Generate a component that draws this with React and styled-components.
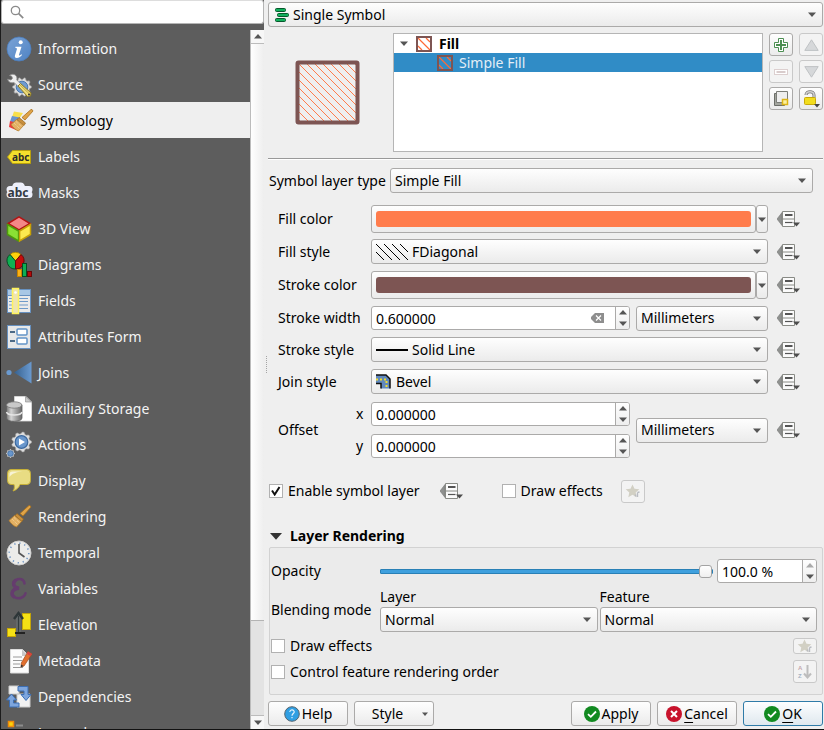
import React, { useState } from "react";
import styled, { createGlobalStyle, css } from "styled-components";

const GlobalStyle = createGlobalStyle`
  * { box-sizing: border-box; }
  html, body { margin: 0; height: 100%; }
  #root { height: 100%; }
  body, button, input, select {
    font-family: "Noto Sans", "Open Sans", sans-serif;
    font-size: 14px;
    line-height: 20px;
    color: #000;
  }
  body { background: #efefef; overflow: hidden; }
  svg { display: block; }
`;

const raised = css`
  background: linear-gradient(#fefefe, #ebebeb);
  border: 1px solid #abaaa9;
  border-radius: 3px;
`;

/* ---------- window ---------- */

const Dialog = styled.div`
  display: flex;
  height: 100vh;
  border-left: 1px solid #1c1c1c;
  border-bottom: 1px solid #111;
  background: #efefef;
`;

const Sidebar = styled.aside`
  flex: 0 0 263px;
  display: flex;
  flex-direction: column;
  background: #5d5d5d;
  min-height: 0;
`;

const SearchBox = styled.label`
  flex: none;
  display: flex;
  align-items: center;
  gap: 6px;
  height: 24px;
  padding: 0 8px;
  background: #fff;
  border: 1px solid #b4b4b4;
  border-top-color: #ddd;
  border-radius: 3px;
`;

const SearchInput = styled.input`
  flex: 1;
  min-width: 0;
  border: 0;
  padding: 0;
  outline: 0;
  background: transparent;
`;

const SidebarBody = styled.div`
  flex: 1;
  display: flex;
  min-height: 0;
  padding-top: 6px;
`;

const NavList = styled.nav`
  flex: 1;
  min-width: 0;
  overflow: hidden;
`;

const NavItem = styled.button`
  display: flex;
  align-items: center;
  gap: 6px;
  width: 100%;
  height: 36px;
  border: 0;
  padding: 1px 0 0 ${(p) => (p.$active ? 7 : 5)}px;
  text-align: left;
  color: ${(p) => (p.$active ? "#000" : "#f4f4f4")};
  background: ${(p) => (p.$active ? "#efefef" : "transparent")};
`;

const Scrollbar = styled.div`
  flex: 0 0 14px;
  display: flex;
  flex-direction: column;
  background: #e3e3e3;
  border-left: 1px solid #bcbcbc;
`;

const ScrollButton = styled.button`
  flex: 0 0 14px;
  display: grid;
  place-items: center;
  padding: 0;
  border: 0;
  background: #f7f7f7;
  border-top: ${(p) => (p.$down ? "1px solid #bcbcbc" : "0")};
  border-bottom: ${(p) => (p.$down ? "0" : "1px solid #bcbcbc")};
`;

const ScrollTrack = styled.div`
  flex: 1;
  display: flex;
`;

const ScrollThumb = styled.div`
  flex: 1;
  height: 86%;
  background: linear-gradient(to right, #fff, #eeeeee);
  border-bottom: 1px solid #b4b4b4;
`;

const Splitter = styled.div`
  flex: 0 0 4px;
  display: grid;
  place-items: center;
`;

const SplitterGrip = styled.span`
  height: 17px;
  border-left: 1px dotted #a5a5a5;
`;

const Main = styled.main`
  flex: 1;
  min-width: 0;
  display: flex;
  flex-direction: column;
  padding: 2px 1px 3px 0;
`;

/* ---------- controls ---------- */

const Stack = styled.div`
  display: grid;
  align-items: center;
  flex: ${(p) => p.$flex || "1"};
  min-width: 0;
  height: 25px;
  > * { grid-area: 1 / 1; }
`;

const Select = styled.select`
  appearance: none;
  width: 100%;
  height: 25px;
  padding: 0 24px 0 ${(p) => p.$indent || 4}px;
  outline: 0;
  ${raised}
`;

const Overlay = styled.span`
  pointer-events: none;
  justify-self: ${(p) => (p.$end ? "end" : "start")};
  margin: ${(p) => (p.$end ? "0 7px 0 0" : `0 0 0 ${p.$inset || 5}px`)};
`;

const SpinBox = styled.div`
  flex: ${(p) => p.$flex || "1"};
  min-width: 0;
  display: flex;
  align-items: center;
  height: 24px;
  background: #fff;
  border: 1px solid #abaaa9;
  border-radius: 3px;
  overflow: hidden;
`;

const SpinInput = styled.input`
  flex: 1;
  min-width: 0;
  height: 22px;
  padding: 0 4px;
  border: 0;
  outline: 0;
  background: transparent;
`;

const ClearButton = styled.button`
  border: 0;
  padding: 0;
  margin-right: 11px;
  background: transparent;
`;

const SpinButtons = styled.div`
  flex: 0 0 14px;
  align-self: stretch;
  display: grid;
  grid-template-rows: 1fr 1fr;
  border-left: 1px solid #abaaa9;
  background: linear-gradient(#fefefe, #eeeeee);
`;

const SpinStep = styled.button`
  display: grid;
  place-items: center;
  border: 0;
  padding: 0;
  background: transparent;
`;

const ToolButton = styled.button`
  display: grid;
  place-items: center;
  width: 24px;
  height: ${(p) => (p.$short ? 16 : 23)}px;
  padding: 0;
  ${raised}
  ${(p) => p.disabled && css`border-color: #c9c9c9; background: #f3f3f3;`}
`;

const OverrideButton = styled.button`
  flex: none;
  width: 24px;
  padding: 0;
  border: 0;
  background: transparent;
`;

const CheckLabel = styled.label`
  display: flex;
  align-items: center;
  gap: 5px;
`;

const CheckBox = styled.span`
  display: grid;
  place-items: center;
  > * { grid-area: 1 / 1; pointer-events: none; }
  > input { pointer-events: auto; }
`;

const CheckInput = styled.input`
  appearance: none;
  width: 14px;
  height: 14px;
  margin: 0;
  background: #fff;
  border: 1px solid #b1b1b1;
`;

/* ---------- symbol area ---------- */

const SymbolArea = styled.section`
  display: flex;
  margin-top: 6px;
  gap: 6px;
  height: 119px;
`;

const Preview = styled.div`
  flex: 0 0 119px;
  display: grid;
  place-items: center;
`;

const Tree = styled.div`
  flex: 1;
  min-width: 0;
  background: #fff;
  border: 1px solid #b5b5b5;
`;

const TreeRow = styled.div`
  display: flex;
  align-items: center;
  height: 19px;
  gap: ${(p) => (p.$selected ? 6 : 7)}px;
  padding-left: ${(p) => (p.$selected ? 43 : 5)}px;
  font-weight: ${(p) => (p.$selected ? 400 : 700)};
  color: ${(p) => (p.$selected ? "#e4eef6" : "#000")};
  background: ${(p) => (p.$selected ? "#308cc6" : "transparent")};
`;

const TreeArrow = styled.span`
  width: 10px;
  display: grid;
  place-items: center;
`;

const ToolGrid = styled.div`
  display: grid;
  grid-template-columns: 24px 24px;
  gap: 4px 6px;
  align-content: start;
`;

const Rule = styled.hr`
  width: 100%;
  margin: 6px 0 8px;
  border: 0;
  border-top: 1px solid #999;
  border-bottom: 1px solid #fff;
`;

const TypeRow = styled.div`
  display: flex;
  align-items: center;
  padding: 0 10px 0 1px;
  > label { flex: 0 0 121px; white-space: nowrap; }
`;

const Form = styled.div`
  display: grid;
  grid-template-columns: 93px minmax(0, 1fr) 24px;
  row-gap: 6px;
  padding: 0 22px 0 10px;
  margin-top: 12px;
`;

const FormLabel = styled.label`
  align-self: center;
  white-space: nowrap;
`;

const Field = styled.div`
  display: flex;
  gap: 6px;
  min-height: 26px;
  margin-right: 9px;
  align-items: ${(p) => (p.$center ? "center" : "start")};
`;

const ColorField = styled.div`
  display: flex;
  height: 28px;
  margin-right: 9px;
`;

const ColorButton = styled.button`
  flex: 1;
  padding: 5px 4px;
  ${raised}
`;

const Swatch = styled.span`
  display: block;
  height: 16px;
  border-radius: 3px;
  background: ${(p) => p.$color};
`;

const ColorMenu = styled.button`
  flex: 0 0 12px;
  display: grid;
  place-items: center;
  padding: 0;
  ${raised}
`;

const OffsetLabel = styled.div`
  display: grid;
  grid-template-columns: 1fr 15px;
  grid-template-rows: 26px 26px;
  row-gap: 6px;
  align-items: center;
  > :first-child { grid-row: 1 / 3; }
`;

const OffsetSpins = styled.div`
  flex: 1;
  min-width: 0;
  display: grid;
  gap: 6px;
  > * { margin: 1px 0; }
`;

const EnableRow = styled.div`
  display: flex;
  align-items: center;
  margin-top: 20px;
  padding-left: 1px;
  height: 24px;
`;

const EnableGap = styled.span`
  flex: 0 0 ${(p) => p.$w}px;
`;

/* ---------- layer rendering ---------- */

const SectionTitle = styled.button`
  display: flex;
  align-items: center;
  gap: 8px;
  margin-top: 23px;
  padding: 0 0 0 2px;
  border: 0;
  font-weight: 700;
  background: transparent;
`;

const GroupBox = styled.section`
  margin: 1px 0 0 1px;
  padding: 11px 5px 11px 1px;
  display: grid;
  grid-template-columns: 109px minmax(0, 1fr);
  align-items: center;
  background: #ebebeb;
  border: 1px solid #d2d2d2;
  border-radius: 2px;
`;

const OpacityRow = styled.div`
  display: flex;
  align-items: center;
  gap: 4px;
`;

const Slider = styled.input`
  appearance: none;
  flex: 1;
  min-width: 0;
  height: 14px;
  margin: 0;
  background: transparent;
  &::-webkit-slider-runnable-track {
    height: 5px;
    border: 1px solid #2980b6;
    border-radius: 1px;
    background: #3fa0de;
  }
  &::-webkit-slider-thumb {
    appearance: none;
    width: 13px;
    height: 13px;
    margin-top: -5px;
    border: 1px solid #a3a3a3;
    border-radius: 3px;
    background: linear-gradient(#fefefe, #efefef);
  }
`;

const BlendRow = styled.div`
  display: grid;
  grid-template-columns: 1fr 1fr;
  column-gap: 2px;
  margin-top: 4px;
`;

const BlendLabel = styled.span`
  padding-top: 4px;
  white-space: nowrap;
`;

const OptionRow = styled.div`
  grid-column: 1 / 3;
  display: flex;
  align-items: center;
  justify-content: space-between;
  height: ${(p) => p.$h}px;
  margin-top: 6px;
`;

/* ---------- footer ---------- */

const Footer = styled.footer`
  display: flex;
  gap: 6px;
  margin-top: auto;
`;

const PushButton = styled.button`
  flex: 0 0 80px;
  display: flex;
  align-items: center;
  justify-content: center;
  gap: 2px;
  height: 25px;
  padding: 0;
  ${raised}
  ${(p) =>
    p.$primary &&
    css`
      border-color: #2f7ba8;
      background: linear-gradient(#fdfeff, #dfe8ee);
    `}
  u { text-underline-offset: 3px; }
`;

const Spacer = styled.span`
  flex: 1;
`;

const StyleText = styled.span`
  padding: 0 17px 0 12px;
`;

/* ---------- glyphs ---------- */

const Down = ({ w = 8, h = 5, c = "#555" }) => (
  <svg width={w} height={h} viewBox="0 0 8 5"><path d="M0 .5h8L4 5z" fill={c} /></svg>
);
const Up = ({ w = 8, h = 5, c = "#555" }) => (
  <svg width={w} height={h} viewBox="0 0 8 5"><path d="M0 4.5h8L4 0z" fill={c} /></svg>
);

const HatchIcon = ({ bg = "none" }) => (
  <svg width="16" height="16" viewBox="0 0 16 16">
    <rect width="16" height="16" fill={bg} />
    <path d="M2 2l12 12M10 2l4 4M2 10l4 4" stroke="#ff6a35" strokeWidth="1.200" fill="none" />
    <rect x="1" y="1" width="14" height="14" fill="none" stroke="#7d5553" strokeWidth="2" />
  </svg>
);

const PreviewSwatch = () => {
  const lines = [];
  for (let i = -56; i < 64; i += 8) lines.push(`M${i + 3} 3l60 60`);
  return (
    <svg width="65" height="65" viewBox="0 0 65 65">
      <defs><clipPath id="pv"><rect x="3" y="3" width="59" height="59" /></clipPath></defs>
      <path clipPath="url(#pv)" d={lines.join("")} stroke="#ff7c4c" strokeWidth="1" shapeRendering="crispEdges" />
      <rect x="2.500" y="2.500" width="60" height="60" rx="1" fill="none" stroke="#7d5553" strokeWidth="4" />
    </svg>
  );
};

const Override = () => (
  <svg width="24" height="18" viewBox="0 0 24 18">
    <path d="M5 2.500v13L0 9z" fill="#8f918f" stroke="#777" strokeWidth=".6" />
    <path d="M5.500 1.500h12v15h-12z" fill="#fbfbfb" stroke="#888a85" />
    <path d="M5.500 9h12" stroke="#888a85" />
    <path d="M8 5h7.500" stroke="#555" strokeWidth="2" />
    <path d="M8 12.500h7.500" stroke="#555" strokeWidth="1.200" />
    <path d="M16 12.500h7l-3.500 4z" fill="#4d4d4d" />
  </svg>
);

const Star = () => (
  <svg width="16" height="14" viewBox="0 0 16 14">
    <path d="M7.500 .5l2 4.300 4.800.5-3.600 3.200 1 4.700-4.200-2.400-4.200 2.400 1-4.700L.7 5.300l4.800-.5z" fill="#d2d0c4" />
    <path d="M12.500 13V8.500M10.500 12.500v-2M12.500 8.500l2-.5" stroke="#b9bcc2" strokeWidth="1.400" fill="none" />
  </svg>
);

const Svg = ({ children, size = 26 }) => (
  <svg width={size} height={size} viewBox="0 0 26 26" overflow="visible">{children}</svg>
);

const gearPath = (cx, cy, r, n) => {
  const pts = [];
  for (let i = 0; i < n * 4; i++) {
    const a = ((i - 0.5) / (n * 4)) * Math.PI * 2;
    const rr = i % 4 < 2 ? r : r * 0.82;
    pts.push(`${(cx + rr * Math.cos(a)).toFixed(2)} ${(cy + rr * Math.sin(a)).toFixed(2)}`);
  }
  return `M${pts.join("L")}Z`;
};

const Brush = () => (
  <g>
    <path d="M24 1.500l1 1.500-8 9-3-2.500 9-8z" fill="#e0a448" stroke="#a8701c" strokeWidth=".8" />
    <path d="M11 9.500l6.500 5.500-1.500 2.500-7-6z" fill="#c98f3c" stroke="#94641e" strokeWidth=".7" />
    <path d="M8.500 11.500l7 6-5 5.500c-3-1-5.500-3.500-7.500-6.500z" fill="#e3b063" stroke="#b57d2b" strokeWidth=".8" />
    <path d="M6 15l6 6M8 13.500l6 5.500" stroke="#f4d6a0" strokeDasharray="1 1" />
  </g>
);

const icons = {
  Information: (
    <Svg>
      <defs><linearGradient id="inf" x1="0" y1="0" x2="1" y2="1"><stop offset="0" stopColor="#7ba3d6" /><stop offset="1" stopColor="#4f83c4" /></linearGradient></defs>
      <circle cx="13" cy="13" r="12" fill="url(#inf)" stroke="#4b7ebc" strokeWidth=".8" />
      <circle cx="14.700" cy="6.300" r="2" fill="#fff" />
      <path d="M9.500 10.700h6l-2.600 8.300c0 .8 1 .7 2.600-.8l.5.800c-1.500 2-3.500 3-5.200 3-1.800 0-2.300-1-1.800-2.700l1.900-6c.2-.9-.2-1.200-1.700-1.500z" fill="#fff" />
    </Svg>
  ),
  Source: (
    <Svg>
      <path d={gearPath(16, 15, 9.5, 10)} fill="#dcdcdc" stroke="#8e8e8e" strokeWidth=".7" />
      <circle cx="16" cy="15" r="5.800" fill="#6f9bd0" stroke="#4b78ae" />
      <path d="M3.500 3.500c3-2.500 7-1 7.500 2.500L10.800 8l5 5-2.600 2.600-5-5c-3 .8-6-.6-6.600-3.400l3.400.8 1.500-1.800-1-2.200z" fill="#eee" stroke="#8a8a8a" strokeWidth=".8" />
      <path d="M12 14l2.500-2.500L25 21l-.5 3-3 .5z" fill="#eddc79" stroke="#8e7b25" />
      <path d="M14 13l9.500 9" stroke="#a8953d" strokeWidth=".7" />
      <circle cx="23" cy="22.500" r="1" fill="#333" />
    </Svg>
  ),
  Symbology: (
    <Svg>
      <path d="M6 3.500l9 1.500-4 6-7-2z" fill="#f8df4b" />
      <path d="M4 8l8 1.500-3 6-7-2z" fill="#6894d0" />
      <path d="M2 13l8 2 2 6-4 1-7-3z" fill="#ec3b3b" />
      <Brush />
    </Svg>
  ),
  Labels: (
    <Svg>
      <path d="M1.500 13l5-6.500h18v13h-18z" fill="#f4df2c" stroke="#b8a00e" />
      <text x="6" y="16.500" fontSize="10" fontWeight="700" fontFamily="Noto Sans" fill="#2b2b2b">abc</text>
    </Svg>
  ),
  Masks: (
    <Svg>
      <path d="M4 9.500h5l1-3.500h5l1.500 3.500H23M4 14.500h19" stroke="#edeffa" strokeWidth="7" strokeLinecap="round" strokeLinejoin="round" fill="#edeffa" />
      <text x="1.500" y="16.500" fontSize="12" fontWeight="700" fontFamily="Noto Sans" fill="#333a44">abc</text>
    </Svg>
  ),
  "3D View": (
    <Svg>
      <path d="M13 .8l11 6.700-11 6.500L2 7.500z" fill="#f48787" stroke="#b11414" strokeWidth="1.500" />
      <path d="M1.500 8.500L12.600 15v10L1.500 18.500z" fill="#8ae034" stroke="#4d9a0c" strokeWidth="1.500" />
      <path d="M24.500 8.500L13.600 15v10l10.900-6.500z" fill="#fce94f" stroke="#c7a106" strokeWidth="1.500" />
    </Svg>
  ),
  Diagrams: (
    <Svg>
      <path d="M9.500 9L4 2.500a8 8 0 0 1 11 0z" fill="#fcd20c" stroke="#a98500" strokeWidth=".8" />
      <path d="M9.500 9v8A8.200 8.200 0 0 1 4 2.500z" fill="#0faf52" stroke="#064c24" />
      <path d="M9.500 9v8A8.200 8.200 0 0 0 15 2.500z" fill="#c50c0c" stroke="#680808" />
      <rect x="11.500" y="17.500" width="4" height="7" fill="#fcb116" stroke="#c98500" />
      <rect x="16.500" y="11.500" width="4" height="13" fill="#0faf52" stroke="#064c24" />
      <rect x="21.500" y="19.500" width="4" height="5" fill="#b60a0a" stroke="#680808" />
    </Svg>
  ),
  Fields: (
    <Svg>
      <rect x="1.500" y="1.500" width="23" height="23" fill="#eaeaea" stroke="#6791c0" />
      <rect x="2" y="2" width="22" height="5" fill="#a8c7e5" />
      <path d="M2 7.500h22" stroke="#6791c0" />
      <path d="M3 10.500h20M3 13.500h20M3 17h20M3 20.500h20" stroke="#6e9ac9" strokeDasharray="9 1" />
      <rect x="6.500" y=".5" width="6" height="25" fill="#eee5b0" stroke="#fff35c" strokeWidth="1.500" />
      <circle cx="9.500" cy="4.500" r="1.300" fill="#fff" />
    </Svg>
  ),
  "Attributes Form": (
    <Svg>
      <rect x="1.500" y="1.500" width="23" height="23" fill="#e7e8e9" stroke="#6791c0" />
      <path d="M4 8h5M4 17h5" stroke="#4c6a87" strokeWidth="2" />
      <rect x="11" y="5" width="10" height="6" rx="1" fill="#fff" stroke="#6394c8" strokeWidth="1.500" />
      <rect x="11" y="14" width="10" height="6" rx="1" fill="#fff" stroke="#6394c8" strokeWidth="1.500" />
    </Svg>
  ),
  Joins: (
    <Svg>
      <defs><linearGradient id="jn"><stop offset="0" stopColor="#36618f" /><stop offset="1" stopColor="#6a9ad0" /></linearGradient></defs>
      <circle cx="3" cy="12.500" r="2.600" fill="#6a9ad0" />
      <path d="M8 12.500L25.500 1.500v22z" fill="url(#jn)" />
    </Svg>
  ),
  "Auxiliary Storage": (
    <Svg>
      <defs><linearGradient id="db"><stop offset="0" stopColor="#777" /><stop offset=".3" stopColor="#d5d5d5" /><stop offset="1" stopColor="#666" /></linearGradient></defs>
      <path d="M8.500.5H20l5.500 5.500v19h-17z" fill="#fff" stroke="#ddd" strokeWidth=".8" />
      <path d="M19.500.5V6h6z" fill="#c8c8c8" stroke="#888" strokeWidth=".6" />
      <path d="M.5 9v13c0 4.500 15.500 4.500 15.500 0V9z" fill="url(#db)" stroke="#626262" strokeWidth=".8" />
      <ellipse cx="8.200" cy="9" rx="7.700" ry="3.200" fill="#c9c9c9" stroke="#777" strokeWidth=".8" />
      <path d="M.5 16c1 4 14.500 4 15.500 0" fill="none" stroke="#e5e5e5" strokeWidth="1.500" />
    </Svg>
  ),
  Actions: (
    <Svg>
      <path d={gearPath(15.5, 10, 10, 9)} fill="#dedede" stroke="#aaa" strokeWidth=".6" />
      <circle cx="15.500" cy="10" r="6.300" fill="#6896cc" stroke="#3b689d" strokeWidth="1.200" />
      <path d="M13 6.500l6 3.500-6 3.500z" fill="#fff" />
      <path d={gearPath(4.5, 21.5, 4.3, 8)} fill="#dedede" />
      <circle cx="4.500" cy="21.500" r="2.800" fill="#6896cc" stroke="#3b689d" strokeWidth=".8" />
    </Svg>
  ),
  Display: (
    <Svg>
      <path d="M5 1.500h16q3.500 0 3.500 4v7q0 4-3.500 4h-7c-1 3-3.500 5.500-7 6.500 1.500-2 1.700-4 1-6.500H5q-3.500 0-3.500-4v-7q0-4 3.500-4z" fill="#e8dc83" stroke="#c5af38" />
      <path d="M3.500 9V6q0-2.500 3-2.500h10C10 4 6 5.500 3.500 9z" fill="#f7f3d5" />
    </Svg>
  ),
  Rendering: <Svg><Brush /></Svg>,
  Temporal: (
    <Svg>
      <circle cx="13" cy="13" r="12" fill="#ececea" stroke="#cfcfcf" />
      <circle cx="13" cy="13" r="9.800" fill="none" stroke="#7196c4" strokeWidth="1.600" strokeDasharray="1.300 3.830" />
      <path d="M13 4v9l5.500 4" fill="none" stroke="#555" strokeWidth="1.600" />
    </Svg>
  ),
  Variables: (
    <Svg>
      <path d="M18.500 7.500C18 3 13.500 2 10 4c-4 2.500-3 7.500 3 8.200-7 .3-9 6.300-4.500 9 4.500 2.500 10 .3 11-4" fill="none" stroke="#653c6e" strokeWidth="2.600" strokeLinecap="round" />
      <path d="M10 4c-4 2.500-3 7.500 3 8.200-7 .3-9 6.300-4.500 9" fill="none" stroke="#653c6e" strokeWidth="3.400" />
    </Svg>
  ),
  Elevation: (
    <Svg>
      <rect x="1.500" y="16.500" width="8" height="8" fill="#f5e116" stroke="#c4a508" />
      <rect x="16.500" y="1.500" width="8" height="16" fill="#f5e116" stroke="#c4a508" />
      <path d="M9 21h10" stroke="#222" strokeWidth="2" />
      <path d="M12.500 20V4" stroke="#6f7576" strokeWidth="4" />
      <path d="M12.500 20V4" stroke="#333b3d" strokeWidth="1.500" />
      <path d="M8 7l4.500-6L17 7" fill="none" stroke="#2d3638" strokeWidth="2.400" />
    </Svg>
  ),
  Metadata: (
    <Svg>
      <path d="M4.500 1.500h12l6 6v17.500h-18z" fill="#fcfcfc" stroke="#ddd" />
      <path d="M16 1.500V8h6z" fill="#c8c8c8" />
      <path d="M7 9h9M7 12.500h9M7 16h7M7 19.500h10" stroke="#999" strokeWidth="1.200" />
      <path d="M22 3.500l4 2.500-8 12-3 1 .3-4z" fill="#e16f2e" stroke="#a44b1b" strokeWidth=".7" />
      <path d="M15.200 16.500l-.4 2.800 2.700-1.200z" fill="#333" />
      <path d="M22 3.500l4 2.500-1.500 2-4-2.300z" fill="#d84242" />
    </Svg>
  ),
  Dependencies: (
    <Svg>
      <path d="M3 2h10v8H3zM11 10h13v13H11z" fill="#f2f2f2" stroke="#ccc" />
      <path d="M12 2.500h10v8h3l-5 6-5-6h3V7h-6z" fill="#7ea6de" stroke="#3d6fb4" />
      <path d="M13 23H3.500v-7h-3l5-6 5 6h-3v3H13z" fill="#7ea6de" stroke="#3d6fb4" />
    </Svg>
  ),
  Legend: (
    <Svg>
      <rect x="2.500" y="1.500" width="5" height="5" fill="#fcd20c" stroke="#ef8b0c" strokeWidth="1.500" />
      <path d="M10 5.500h7" stroke="#8c8c8c" strokeWidth="2" />
      <rect x="2.500" y="13.500" width="5" height="5" fill="#fcd20c" stroke="#ef8b0c" strokeWidth="1.500" />
    </Svg>
  ),
};

const SingleSymbolIcon = () => (
  <svg width="14" height="14" viewBox="0 0 14 14" fill="#12b05c" stroke="#07572c">
    <rect x=".5" y=".5" width="10" height="3" rx="1" />
    <rect x="2.500" y="5.500" width="11" height="3" rx="1" />
    <rect x=".5" y="10.500" width="10" height="3" rx="1" />
  </svg>
);
const DiagonalIcon = () => (
  <svg width="32" height="16" viewBox="0 0 32 16">
    <path d="M0 8l8 8M0 0l16 16M8 0l16 16M16 0l16 16M24 0l8 8" stroke="#000" fill="none" shapeRendering="crispEdges" />
  </svg>
);
const LineIcon = () => (
  <svg width="32" height="2" viewBox="0 0 32 2"><path d="M0 1h32" stroke="#000" strokeWidth="2" /></svg>
);
const BevelIcon = () => (
  <svg width="15" height="15" viewBox="0 0 15 15">
    <path d="M0 1h10l4 4v9.500H5V9H0z" fill="#6189bd" />
    <path d="M0 1h10l4 4v9.500M0 9.500h5v5" fill="none" stroke="#111" strokeWidth="1.500" />
    <path d="M0 5.500h10.500v9" fill="none" stroke="#f2de2c" strokeWidth="2" strokeDasharray="2 2" />
  </svg>
);

const AddIcon = () => (
  <svg width="16" height="16" viewBox="0 0 16 16">
    <path d="M5.500 1.500h5v4h4v5h-4v4h-5v-4h-4v-5h4z" fill="#fff" stroke="#4c8f52" />
    <path d="M8 3v10M3 8h10" stroke="#4c8f52" strokeWidth="2" />
  </svg>
);
const RemoveIcon = () => (
  <svg width="14" height="6" viewBox="0 0 14 6">
    <rect x=".5" y=".5" width="13" height="5" fill="#fff" stroke="#dccfcf" /><path d="M2.500 3h9" stroke="#d9cccc" strokeWidth="2" />
  </svg>
);
const TriIcon = ({ flip }) => (
  <svg width="15" height="12" viewBox="0 0 15 12">
    <path d={flip ? "M.8.6h13.400L7.500 11.200z" : "M.8 11.400h13.400L7.500.8z"} fill="#d6d8da" stroke="#bfc2c4" />
  </svg>
);
const DuplicateIcon = () => (
  <svg width="15" height="15" viewBox="0 0 15 15">
    <path d="M.5 2.500h10v12H.5z" fill="#a4a69f" stroke="#6b6d68" />
    <path d="M2.500.5h11v11h-11z" fill="#eee" stroke="#7b7d78" />
    <rect x="8.500" y="8.500" width="5" height="5" fill="#fbf0a0" stroke="#deb414" strokeWidth="1.500" />
  </svg>
);
const LockIcon = () => (
  <svg width="18" height="18" viewBox="0 0 18 18">
    <path d="M4 5c0-4.500 8-4.500 8 0v3" fill="none" stroke="#777" strokeWidth="3" />
    <path d="M4 5c0-4.500 8-4.500 8 0v3" fill="none" stroke="#d0d0d0" strokeWidth="1.500" />
    <rect x="2.500" y="7.500" width="11" height="7" rx="1" fill="#f2dd1d" stroke="#c9a90a" />
    <path d="M12 14h6l-3 3.500z" fill="#444" />
  </svg>
);
const SortIcon = () => (
  <svg width="16" height="20" viewBox="0 0 16 20" fontSize="6" fontWeight="700" fontFamily="Liberation Sans">
    <text x="1" y="8" fill="#c4a9ae">A</text>
    <text x="1" y="16" fill="#a5b1c2">Z</text>
    <path d="M10.500 3v12M7 11.500l3.500 4 3.500-4" fill="none" stroke="#bdbdbd" strokeWidth="2" />
  </svg>
);
const ClearIcon = () => (
  <svg width="13" height="10" viewBox="0 0 13 10">
    <path d="M4 0h9v10H4L0 6V4z" fill="#8e8e8e" /><path d="M5 2.500l5 5M10 2.500l-5 5" stroke="#fff" strokeWidth="1.200" />
  </svg>
);
const CheckMark = () => (
  <svg width="10" height="10" viewBox="0 0 10 10"><path d="M1 4.500l2.700 4L8.500 1" fill="none" stroke="#111" strokeWidth="2" /></svg>
);
const RoundIcon = ({ kind }) => (
  <svg width="16" height="16" viewBox="0 0 16 16">
    <circle cx="8" cy="8" r={kind === "help" ? 7.3 : 8} fill={{ help: "#309fe3", ok: "#128a21", no: "#c8132c" }[kind]} stroke={kind === "help" ? "#55656f" : "none"} />
    {kind === "ok" && <path d="M4 8.200l2.800 2.600L12 5.500" fill="none" stroke="#fff" strokeWidth="1.800" />}
    {kind === "no" && <path d="M5 5l6 6M11 5l-6 6" stroke="#fff" strokeWidth="2" />}
    {kind === "help" && <path d="M5.800 6c.2-3 4.700-2.600 4.400.2C10 7.500 8 7.800 8 9.700M8 11v1.300" fill="none" stroke="#e5f3fc" strokeWidth="1.200" />}
  </svg>
);

/* ---------- composed controls ---------- */

const Combo = ({ id, label, options, icon, indent, inset, flex }) => (
  <Stack $flex={flex}>
    <Select id={id} aria-label={label} $indent={indent}>
      {options.map((o) => <option key={o}>{o}</option>)}
    </Select>
    {icon && <Overlay $inset={inset}>{icon}</Overlay>}
    <Overlay $end><Down /></Overlay>
  </Stack>
);

const Spin = ({ id, label, value, clearable, atMax, flex }) => (
  <SpinBox $flex={flex}>
    <SpinInput id={id} aria-label={label} defaultValue={value} />
    {clearable && <ClearButton aria-label="Clear"><ClearIcon /></ClearButton>}
    <SpinButtons>
      <SpinStep aria-label="Increase"><Up c={atMax ? "#aaa" : "#555"} /></SpinStep>
      <SpinStep aria-label="Decrease"><Down /></SpinStep>
    </SpinButtons>
  </SpinBox>
);

const Check = ({ label, initial = false }) => {
  const [on, setOn] = useState(initial);
  return (
    <CheckLabel>
      <CheckBox>
        <CheckInput type="checkbox" checked={on} onChange={(e) => setOn(e.target.checked)} />
        {on && <CheckMark />}
      </CheckBox>
      {label}
    </CheckLabel>
  );
};

const DataOverride = ({ label }) => (
  <OverrideButton aria-label={`Data-defined override: ${label}`}><Override /></OverrideButton>
);

const ColorRow = ({ id, label, color }) => (
  <>
    <FormLabel htmlFor={id}>{label}</FormLabel>
    <ColorField>
      <ColorButton id={id}><Swatch $color={color} /></ColorButton>
      <ColorMenu aria-label={`${label} menu`}><Down /></ColorMenu>
    </ColorField>
    <DataOverride label={label} />
  </>
);

const UNITS = ["Millimeters", "Points", "Pixels", "Inches"];
const BLEND = ["Normal", "Lighten", "Screen", "Multiply"];

export default function App() {
  const [active, setActive] = useState("Symbology");
  return (
    <>
      <GlobalStyle />
      <Dialog>
        <Sidebar>
          <SearchBox>
            <svg width="14" height="14" viewBox="0 0 14 14" fill="none" stroke="#8a8a8a">
              <circle cx="5.500" cy="5.500" r="4.200" strokeWidth="1.300" /><path d="M8.700 8.700l4.500 4.500" strokeWidth="1.700" />
            </svg>
            <SearchInput type="search" aria-label="Search" />
          </SearchBox>
          <SidebarBody>
            <NavList>
              {Object.keys(icons).map((name) => (
                <NavItem key={name} $active={name === active} onClick={() => setActive(name)}>
                  {icons[name]}
                  {name}
                </NavItem>
              ))}
            </NavList>
            <Scrollbar>
              <ScrollButton aria-label="Scroll up"><Up /></ScrollButton>
              <ScrollTrack><ScrollThumb /></ScrollTrack>
              <ScrollButton $down aria-label="Scroll down"><Down /></ScrollButton>
            </Scrollbar>
          </SidebarBody>
        </Sidebar>
        <Splitter><SplitterGrip /></Splitter>
        <Main>
          <Combo flex="none" label="Renderer" options={["Single Symbol", "Categorized", "Graduated"]} icon={<SingleSymbolIcon />} inset={7} indent={24} />

          <SymbolArea>
            <Preview><PreviewSwatch /></Preview>
            <Tree role="tree" aria-label="Symbol layers">
              <TreeRow role="treeitem" aria-expanded="true">
                <TreeArrow><Down /></TreeArrow>
                <HatchIcon bg="#fff" />
                Fill
              </TreeRow>
              <TreeRow role="treeitem" aria-selected="true" $selected>
                <HatchIcon />
                Simple Fill
              </TreeRow>
            </Tree>
            <ToolGrid>
              <ToolButton aria-label="Add symbol layer"><AddIcon /></ToolButton>
              <ToolButton aria-label="Move up" disabled><TriIcon /></ToolButton>
              <ToolButton aria-label="Remove symbol layer" disabled><RemoveIcon /></ToolButton>
              <ToolButton aria-label="Move down" disabled><TriIcon flip /></ToolButton>
              <ToolButton aria-label="Duplicate"><DuplicateIcon /></ToolButton>
              <ToolButton aria-label="Lock color"><LockIcon /></ToolButton>
            </ToolGrid>
          </SymbolArea>

          <Rule />

          <TypeRow>
            <label htmlFor="type">Symbol layer type</label>
            <Combo id="type" options={["Simple Fill", "Gradient Fill"]} />
          </TypeRow>

          <Form>
            <ColorRow id="fill-color" label="Fill color" color="#ff7c4c" />

            <FormLabel htmlFor="fill-style">Fill style</FormLabel>
            <Field><Combo id="fill-style" options={["FDiagonal", "Solid"]} icon={<DiagonalIcon />} indent={40} /></Field>
            <DataOverride label="Fill style" />

            <ColorRow id="stroke-color" label="Stroke color" color="#7d5553" />

            <FormLabel htmlFor="stroke-width">Stroke width</FormLabel>
            <Field $center>
              <Spin id="stroke-width" value="0.600000" clearable />
              <Combo flex="0 0 132px" label="Stroke width unit" options={UNITS} />
            </Field>
            <DataOverride label="Stroke width" />

            <FormLabel htmlFor="stroke-style">Stroke style</FormLabel>
            <Field><Combo id="stroke-style" options={["Solid Line", "Dash Line"]} icon={<LineIcon />} indent={40} /></Field>
            <DataOverride label="Stroke style" />

            <FormLabel htmlFor="join">Join style</FormLabel>
            <Field><Combo id="join" options={["Bevel", "Miter", "Round"]} icon={<BevelIcon />} indent={24} /></Field>
            <DataOverride label="Join style" />

            <OffsetLabel>
              <span>Offset</span>
              <label htmlFor="off-x">x</label>
              <label htmlFor="off-y">y</label>
            </OffsetLabel>
            <Field $center>
              <OffsetSpins>
                <Spin id="off-x" value="0.000000" />
                <Spin id="off-y" value="0.000000" />
              </OffsetSpins>
              <Combo flex="0 0 132px" label="Offset unit" options={UNITS} />
            </Field>
            <DataOverride label="Offset" />
          </Form>

          <EnableRow>
            <Check label="Enable symbol layer" initial />
            <EnableGap $w={20} />
            <DataOverride label="Enable symbol layer" />
            <EnableGap $w={38} />
            <Check label="Draw effects" />
            <EnableGap $w={18} />
            <ToolButton aria-label="Customize effects" disabled><Star /></ToolButton>
          </EnableRow>

          <SectionTitle aria-expanded="true">
            <Down w={12} h={8} c="#333" />
            Layer Rendering
          </SectionTitle>
          <GroupBox>
            <label htmlFor="opacity">Opacity</label>
            <OpacityRow>
              <Slider id="opacity" type="range" min="0" max="100" defaultValue="100" />
              <Spin flex="0 0 100px" label="Opacity value" value="100.0 %" atMax />
            </OpacityRow>
            <BlendLabel>Blending mode</BlendLabel>
            <BlendRow>
              <label htmlFor="blend-layer">Layer</label>
              <label htmlFor="blend-feature">Feature</label>
              <Combo id="blend-layer" options={BLEND} />
              <Combo id="blend-feature" options={BLEND} />
            </BlendRow>
            <OptionRow $h={16}>
              <Check label="Draw effects" />
              <ToolButton $short aria-label="Layer effects" disabled><Star /></ToolButton>
            </OptionRow>
            <OptionRow $h={23}>
              <Check label="Control feature rendering order" />
              <ToolButton aria-label="Define order" disabled><SortIcon /></ToolButton>
            </OptionRow>
          </GroupBox>

          <Footer>
            <PushButton><RoundIcon kind="help" />Help</PushButton>
            <PushButton><StyleText>Style</StyleText><Down w={6} h={4} /></PushButton>
            <Spacer />
            <PushButton><RoundIcon kind="ok" />Apply</PushButton>
            <PushButton><RoundIcon kind="no" /><span><u>C</u>ancel</span></PushButton>
            <PushButton $primary><RoundIcon kind="ok" /><span><u>O</u>K</span></PushButton>
          </Footer>
        </Main>
      </Dialog>
    </>
  );
}
